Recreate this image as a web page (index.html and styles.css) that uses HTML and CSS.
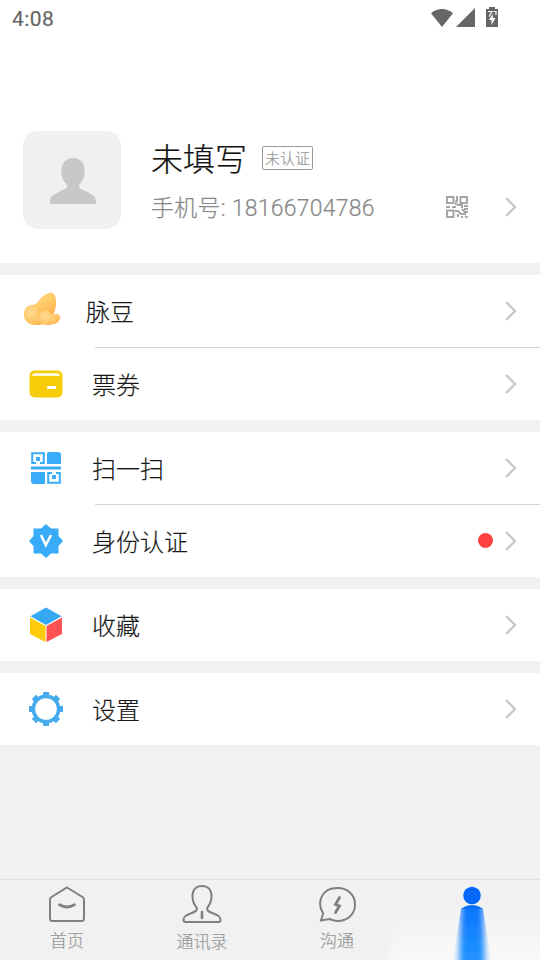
FILE: index.html
```html
<!DOCTYPE html>
<html lang="zh-CN">
<head>
<meta charset="utf-8">
<title>我的</title>
<link rel="stylesheet" href="styles.css">
</head>
<body>
<svg width="0" height="0" class="defs">
  <symbol id="chevron" viewBox="0 0 14 22"><path d="M2 2l9 9-9 9" fill="none" stroke="#c8c8c8" stroke-width="2.3"/></symbol>
</svg>
<div class="app">
  <header class="status">
    <span class="clock">4:08</span>
    <svg class="signals" width="70" height="22" viewBox="0 0 70 22" fill="#666">
      <path d="M1 6.2Q12 -2.2 23 6.2L12 20z"/>
      <path d="M45 1v19H26z"/>
      <path d="M56 2h3V0h6v2h3v18H56z"/>
      <path d="M58 4.5h4l-3 5M63.5 4.5H66V8" fill="none" stroke="#fff" stroke-width="1.2"/>
      <path d="M62.8 7l-4 6h2.7v5l4-7h-2.7z" fill="#fff"/>
    </svg>
  </header>
  <section class="profile">
    <div class="avatar">
      <svg width="46" height="48" viewBox="0 0 46 48" fill="#c8c8c8"><path d="M23 1C15.700 1 11.300 6.500 11.300 14c0 6 2 10.400 5.400 13v3.800C13 33.500 3 37 1 40.200Q0 42 0 47h46q0-5-1-6.800C43 37 33 33.500 29.300 30.800V27c3.400-2.600 5.400-7 5.400-13C34.700 6.500 30.300 1 23 1z"/></svg>
    </div>
    <div class="info">
      <div class="name-line"><h1>未填写</h1><span class="badge">未认证</span></div>
      <div class="phone-line">
        <span class="phone">手机号: 18166704786</span>
        <svg class="qr" width="22" height="22" viewBox="0 0 22 22" fill="none" stroke="#a5a5a5" stroke-width="2">
          <path d="M1 1h6.500v6H1zM14.500 1H21v6h-6.500zM1 14.500h6.500V21H1zM11 0v5.500H9M10 7v2M0 11h4M6 11h4M11 9h5v3M18 10h4M9 15h3l3 3h5M12 21v-3M16 13l3 3h3M15 21h2M19 20l3 2M18 13h4"/>
        </svg>
        <svg class="chev"><use href="#chevron"/></svg>
      </div>
    </div>
  </section>

  <section class="group">
    <div class="row beans">
      <svg class="icon" width="38" height="34" viewBox="0 0 38 34">
        <defs>
          <linearGradient id="bean" x1="0" y1="0" x2=".5" y2="1"><stop offset="0" stop-color="#ffe08c"/><stop offset=".5" stop-color="#ffcb68"/><stop offset="1" stop-color="#ffa747"/></linearGradient>
          <radialGradient id="bean2" cx=".35" cy=".35" r=".75"><stop offset="0" stop-color="#ffdc92"/><stop offset=".6" stop-color="#ffc96c"/><stop offset="1" stop-color="#ffb352"/></radialGradient>
        </defs>
        <path d="M1 22.500c0-6 4-8.500 9-9.500 4-1 5-3 7-6C20 3 26 0 30 1c4 3 4 13 1 20-3 8-9 12-17 12C6 33 1 29 1 22.500z" fill="url(#bean)"/>
        <path d="M1 22.500C1 17 4 13 9 13c5 0 7 4 6 7-1 4 1 9 5 11-2 2-4 2-7 2-7 0-12-4-12-10.500z" fill="url(#bean2)"/>
        <path d="M18 20c4-3 7-2 9 1 2 2 4 1 7 1 4 1 4 5 1 8-5 4-14 4-18 1-3-3-2-9 1-11z" fill="url(#bean2)"/>
      </svg>
      <span class="label">脉豆</span><svg class="chev"><use href="#chevron"/></svg>
    </div>
    <div class="row divided">
      <svg class="icon" width="34" height="28" viewBox="0 0 34 28"><rect x=".5" y=".5" width="33" height="27" rx="5" fill="#f6cb08"/><path d="M3 6.500Q3 3 6.500 3h21Q31 3 31 6.500L29 6H5z" fill="#fff8d5"/><rect x="18" y="16" width="9" height="3" rx="1" fill="#fff"/></svg>
      <span class="label">票券</span><svg class="chev"><use href="#chevron"/></svg>
    </div>
  </section>

  <section class="group">
    <div class="row">
      <svg class="icon" width="32" height="34" viewBox="0 0 32 34"><g fill="#38acf8"><path d="M19 1h9q3 0 3 3v9H17V3q0-2 2-2zM1 21h14v12H4q-3 0-3-3zM1 15.500h30v3H1z"/><path d="M6 6h4v4H6zM22 24h4v4h-4z"/></g><path d="M2.200 13V2.200h11.600V13M2.200 12h4M10 12h3.800M18.200 21v10.800h11.600V21M18.200 22h4M26 22h3.800" fill="none" stroke="#38acf8" stroke-width="2"/></svg>
      <span class="label">扫一扫</span><svg class="chev"><use href="#chevron"/></svg>
    </div>
    <div class="row divided">
      <svg class="icon" width="36" height="36" viewBox="0 0 36 36"><path d="M18 1l5 4.500h7.500V13l4.500 5-4.500 5v7.500H23L18 35l-5-4.500H5.500V23L1 18l4.500-5V5.500H13z" fill="#38acf8"/><path d="M13 12l4.800 10L23 12" fill="none" stroke="#fff" stroke-width="2.600"/></svg>
      <span class="label">身份认证</span><i class="dot"></i><svg class="chev"><use href="#chevron"/></svg>
    </div>
  </section>

  <section class="group">
    <div class="row">
      <svg class="icon" width="34" height="36" viewBox="0 0 34 36"><path d="M17 .5l15.500 8.700L17 18 1.500 9.200z" fill="#36a7f1"/><path d="M1 10.500l15.500 8.500V35L1 27z" fill="#ffcb09"/><path d="M33 10.500L17.500 19v16L33 27z" fill="#ff5353"/></svg>
      <span class="label">收藏</span><svg class="chev"><use href="#chevron"/></svg>
    </div>
  </section>

  <section class="group">
    <div class="row">
      <svg class="icon" width="36" height="36" viewBox="0 0 36 36"><g fill="#45abec"><path id="teeth" d="M15 1h6v5h-6zM15 30h6v5h-6zM1 15h5v6H1zM30 15h5v6h-5z"/><use href="#teeth" transform="rotate(45 18 18)"/></g><circle cx="18" cy="18" r="12.600" fill="#fff" stroke="#45abec" stroke-width="3.600"/></svg>
      <span class="label">设置</span><svg class="chev"><use href="#chevron"/></svg>
    </div>
  </section>

  <nav class="tabs">
    <div class="tab">
      <svg width="40" height="40" viewBox="0 0 40 40"><path d="M20 2.500L35.500 12q1.500 1 1.500 3v18.500q0 2.500-2.500 2.500h-29Q3 36 3 33.500V15q0-2 1.500-3z"/><path d="M12.500 19.800q7.500 4.400 15 0" stroke-width="2.800" stroke-linecap="round"/></svg>
      <span>首页</span>
    </div>
    <div class="tab contacts">
      <svg width="40" height="40" viewBox="0 0 40 40"><path d="M20 1C14 1 10.500 5 10.500 11c0 5 1.500 8.500 4 11.500 1.500 3-1 4-6 6C3 30.500 1.500 32 1.500 35q0 2 2 2h33q2 0 2-2c0-3-1.500-4.500-7-6.500-5-2-7.500-3-6-6 2.500-3 4-6.500 4-11.500C29.500 5 26 1 20 1z"/><path d="M20 27v6" stroke-width="2.600" stroke-linecap="round"/></svg>
      <span>通讯录</span>
    </div>
    <div class="tab">
      <svg width="40" height="40" viewBox="0 0 40 40"><path d="M6.200 28.500C-.5 18 4 3 20.500 3 31 3 38 10 38 19.500S31 36 20.500 36c-3 0-5-.8-8-2L4 35.500z"/><path d="M22.500 12.500l-4 7 4 1.500-4 6.500" stroke-width="2.800" stroke-linecap="round"/></svg>
      <span>沟通</span>
    </div>
    <div class="tab active">
      <svg width="155" height="80" viewBox="0 0 155 80">
        <defs>
          <linearGradient id="beam" gradientUnits="userSpaceOnUse" x1="0" y1="25" x2="0" y2="80"><stop offset="0" stop-color="#0673fd"/><stop offset="1" stop-color="#2494ff"/></linearGradient>
          <linearGradient id="haze" x1="0" y1="0" x2="0" y2="1"><stop offset="0" stop-color="#f2f2f2"/><stop offset="1" stop-color="#fcfcfc"/></linearGradient>
          <filter id="soft" filterUnits="userSpaceOnUse" x="40" y="0" width="94" height="120"><feGaussianBlur stdDeviation="3 0"/></filter>
          <filter id="wide" x="-10%" y="-20%" width="120%" height="150%"><feGaussianBlur stdDeviation="6"/></filter>
          <clipPath id="below"><path d="M76 28.500h22l8 51.500H68z"/></clipPath>
        </defs>
        <path d="M6 36h180v60H6z" fill="url(#haze)" filter="url(#wide)"/>
        <path d="M76 29Q87 21 98 29z" fill="#076ffc"/>
        <g clip-path="url(#below)"><path d="M76.500 10h21l3 90h-27z" fill="url(#beam)" filter="url(#soft)"/></g>
        <circle cx="87" cy="15.500" r="8.800" fill="#0568fb"/>
      </svg>
    </div>
  </nav>
</div>
</body>
</html>
```

FILE: styles.css
```css
* { box-sizing: border-box; }
body { margin: 0; background: #f1f1f1; font-family: Roboto, "Noto Sans CJK SC", sans-serif; font-weight: 300; -webkit-text-stroke: .2px currentColor; color: #181818; }
.defs { position: absolute; }
.app { width: 540px; height: 960px; display: flex; flex-direction: column; overflow: hidden; }
.status { height: 38px; flex: none; background: #fff; display: flex; align-items: center; justify-content: space-between; padding: 0 40px 0 12px; }
.clock { font-size: 21px; font-weight: 400; color: #666; letter-spacing: .4px; }
.signals { margin-top: -3px; }
.profile { height: 225px; flex: none; background: #fff; display: flex; padding: 93px 22px 0 23px; }
.avatar { width: 98px; height: 98px; flex: none; border-radius: 15px; background: #f0f0f0; display: flex; align-items: center; justify-content: center; padding: 2px 0 0 2px; }
.info { flex: 1; padding: 9px 0 0 30px; }
.name-line { display: flex; align-items: center; height: 40px; }
h1 { margin: 0; font-size: 32px; font-weight: 300; line-height: 40px; color: #111; }
.badge { margin-left: 15px; margin-top: -4px; width: 51px; height: 24px; border: 1px solid #999; border-radius: 2px; color: #999; font-size: 15px; line-height: 24px; text-align: center; }
.phone-line { display: flex; align-items: center; height: 30px; margin-top: 12px; }
.phone { font-size: 23px; line-height: 30px; padding-top: 3px; font-weight: 300; letter-spacing: .25px; color: #888; flex: 1; white-space: nowrap; }
.qr { margin-right: 36px; }
.chev { width: 14px; height: 22px; flex: none; }
.group { background: #fff; margin-top: 12px; flex: none; }
.row { height: 72px; display: grid; grid-template-columns: 92px 1fr auto 14px; align-items: center; padding-right: 22px; }
.beans { grid-template-columns: 86px 1fr auto 14px; }
.beans .icon { margin-left: 23px; margin-top: -5px; }
.row .icon { justify-self: center; }
.row.beans .icon { justify-self: start; }
.divided { height: 73px; padding-top: 1px; background: linear-gradient(#d6d6d6, #d6d6d6) 95px 0 / 445px 1px no-repeat; }
.label { font-size: 24px; line-height: 36px; padding-top: 3px; }
.row .chev { grid-column: 4; }
.dot { grid-column: 3; width: 15px; height: 15px; border-radius: 50%; background: #fd4141; margin: -1px 11px 0 0; }
.tabs { margin-top: auto; height: 81px; flex: none; border-top: 1px solid #e0e0e0; display: grid; grid-template-columns: 134px 136px 134px 136px; }
.tab { display: flex; flex-direction: column; align-items: center; padding-top: 5px; color: #999; font-size: 17px; line-height: 24px; }
.tab svg { fill: none; stroke: #808080; stroke-width: 2; flex: none; }
.tab span { margin-top: 4px; }
.contacts span { margin-top: 5px; }
.tab.active { padding: 0; align-items: flex-end; }
.tab.active svg { stroke: none; }
```
